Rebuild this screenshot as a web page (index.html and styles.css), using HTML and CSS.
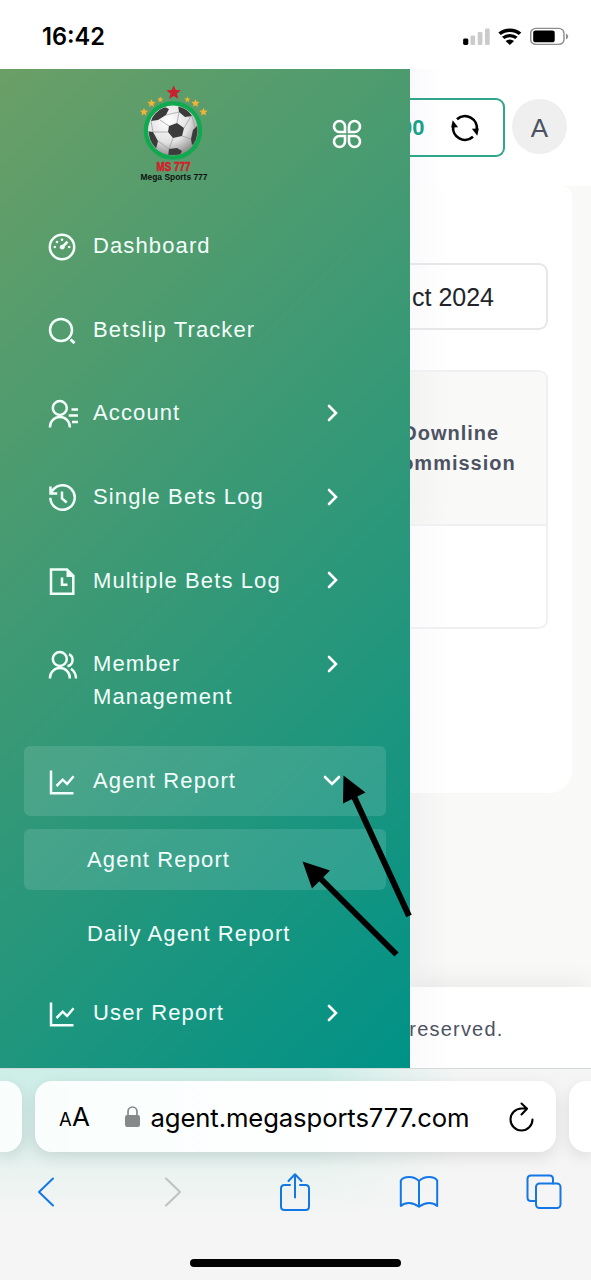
FILE: index.html
```html
<!DOCTYPE html>
<html lang="en">
<head>
<meta charset="utf-8">
<title>Agent Report</title>
<link rel="stylesheet" href="styles.css">
</head>
<body>
<div class="phone">
  <header class="status">
    <span class="time">16:42</span>
    <svg class="status-icons" width="119" height="20" viewBox="0 0 106 20" preserveAspectRatio="none">
      <rect x="1" y="11.500" width="4.600" height="6.500" rx="1.400" fill="#000"/>
      <g fill="#cbcbcb"><rect x="7.500" y="8.500" width="4.200" height="9.500" rx="1.200"/><rect x="14" y="5" width="4.200" height="13" rx="1.200"/><rect x="20.500" y="1.500" width="4.200" height="16.500" rx="1.200"/></g>
      <g fill="none" stroke="#000" stroke-width="3.300"><path d="M33.500 6.800a13.500 13.500 0 0 1 18.200 0"/><path d="M36.700 10.900a8.600 8.600 0 0 1 11.800 0"/></g>
      <path d="M38.800 14.100a5.500 5.500 0 0 1 7.600 0L42.600 18z" fill="#000"/>
      <rect x="61.200" y="1.400" width="29.600" height="16" rx="4.600" fill="none" stroke="#8d8d8d" stroke-width="1.300"/>
      <rect x="63.400" y="3.500" width="19.200" height="11.800" rx="2.400" fill="#000"/>
      <path d="M92.600 6.500q2 1 2 3t-2 3z" fill="#8d8d8d"/>
    </svg>
  </header>

  <div class="app">
    <nav class="sidebar">
      <div class="brand-row">
        <svg class="logo" width="72" height="102" viewBox="0 0 72 102">
          <defs>
            <radialGradient id="ball" cx="40%" cy="32%" r="70%"><stop offset="0" stop-color="#fff"/><stop offset=".6" stop-color="#e2e2e2"/><stop offset="1" stop-color="#8d8d8d"/></radialGradient>
            <clipPath id="ballclip"><circle cx="35" cy="46.500" r="24.500"/></clipPath>
            <path id="star" d="M0-1L.28-.34 1-.3 .44.16 .62.85 0 .47-.62.85-.44.16-1-.3-.28-.34z"/>
          </defs>
          <use href="#star" transform="translate(35.700 8.500) scale(7.300)" fill="#c9202f"/>
          <g fill="#f2b336"><use href="#star" transform="translate(22.300 15.500) scale(3.100)"/><use href="#star" transform="translate(13.500 19.300) scale(4.200)"/><use href="#star" transform="translate(6 28) scale(4.200)"/><use href="#star" transform="translate(49.400 15.500) scale(3.100)"/><use href="#star" transform="translate(57.500 19.300) scale(4.200)"/><use href="#star" transform="translate(65.500 28) scale(4.200)"/></g>
          <circle cx="35" cy="46.500" r="27" fill="none" stroke="#0fa94f" stroke-width="4.500"/>
          <circle cx="35" cy="46.500" r="25" fill="url(#ball)"/>
          <g clip-path="url(#ballclip)">
            <g fill="#3b3b3b"><path d="M31 42l8-3 7 5-2 8-9 2-5-6z"/><path d="M16 29l9-7 6 3-3 6-8 5-7 1z"/><path d="M40 21l10 5 4 6-7 1-6-5z"/><path d="M9 47l6 1 5 9-2 8-8-5z"/><path d="M31 65l8-1 5 3-3 6H30z"/><path d="M55 46l6-6v16l-7 5-1-6z"/></g>
            <g fill="none" stroke="#999" stroke-width=".7"><path d="M31 42l-9-6M39 39l2-11M46 44l7-12M44 52l9 3M35 54l-4 11M30 48l-15 0M28 31l13-3M15 48l-2-11M54 32l3 12M20 57l11 8M53 61l-9 6"/></g>
          </g>
          <text x="35.500" y="87" class="logo-name" textLength="34" lengthAdjust="spacingAndGlyphs">MS 777</text>
          <text x="36" y="95.500" class="logo-sub" textLength="67" lengthAdjust="spacingAndGlyphs">Mega Sports 777</text>
        </svg>
        <svg class="apps" width="30" height="30" viewBox="0 0 30 30" fill="none" stroke="#fff" stroke-width="2.600"><path d="M13 13H7.500A5.500 5.500 0 1 1 13 7.500z"/><path d="M17 13h5.500A5.500 5.500 0 1 0 17 7.500z"/><path d="M13 17H7.500a5.500 5.500 0 1 0 5.500 5.500z"/><path d="M17 17h5.500a5.500 5.500 0 1 1-5.500 5.500z"/></svg>
      </div>

      <div class="menu">
        <div class="item"><svg class="ico" viewBox="0 0 30 30"><circle cx="14" cy="15" r="12.200"/><path d="M14.500 15l5-5.400" stroke-width="2.600"/><g class="solid"><circle cx="14.200" cy="15.200" r="2.400"/><circle cx="14" cy="7.800" r="1.300"/><circle cx="9" cy="10" r="1.300"/><circle cx="6.800" cy="15" r="1.300"/><circle cx="21.200" cy="15" r="1.300"/></g></svg><span class="label">Dashboard</span></div>
        <div class="item"><svg class="ico" viewBox="0 0 30 30"><circle cx="13" cy="14" r="11"/><path d="M22.500 23.500l4 3.600" stroke-width="2.800"/></svg><span class="label">Betslip Tracker</span></div>
        <div class="item"><svg class="ico" viewBox="0 0 30 30"><circle cx="11.800" cy="9" r="7"/><path d="M2 28.500v-1a9.900 9.500 0 0 1 19.800 0v1M23.500 10.400H30M20.800 16.600H30M24 22.900h6"/></svg><span class="label">Account</span><svg class="chev" viewBox="0 0 12 18"><path d="M2 2l7 7-7 7"/></svg></div>
        <div class="item"><svg class="ico" viewBox="0 0 30 30"><path d="M3.300 9.700A12.200 12.200 0 1 1 2.300 14.800M2.500 3.500v7h6.800M14 8.500v7l4.700 4"/></svg><span class="label">Single Bets Log</span><svg class="chev" viewBox="0 0 12 18"><path d="M2 2l7 7-7 7"/></svg></div>
        <div class="item"><svg class="ico" viewBox="0 0 30 30"><path d="M3 3.500h16l6.300 6.300v17.900H3zM14 11.500v7.200h5.500"/><path class="solid" d="M18.500 3v8h7z"/></svg><span class="label">Multiple Bets Log</span><svg class="chev" viewBox="0 0 12 18"><path d="M2 2l7 7-7 7"/></svg></div>
        <div class="item"><svg class="ico" viewBox="0 0 30 30"><circle cx="11.800" cy="9" r="7"/><path d="M2 28.500v-1a9.900 9.500 0 0 1 19.800 0v1M21 4.200a6.400 6.400 0 0 1-1.500 12M23 18.800a12 12 0 0 1 5 9.700"/></svg><span class="label">Member Management</span><svg class="chev" viewBox="0 0 12 18"><path d="M2 2l7 7-7 7"/></svg></div>
        <div class="item active"><svg class="ico" viewBox="0 0 30 30"><path d="M3 3.500v22.700h22.500M8.500 19l6.200-6.300 4.400 4.300 6.500-7.800"/></svg><span class="label">Agent Report</span><svg class="chev down" viewBox="0 0 18 12"><path d="M2 2l7 7 7-7"/></svg></div>
        <div class="item sub active"><span class="label">Agent Report</span></div>
        <div class="item sub"><span class="label">Daily Agent Report</span></div>
        <div class="item"><svg class="ico" viewBox="0 0 30 30"><path d="M3 3.500v22.700h22.500M8.500 19l6.200-6.300 4.400 4.300 6.500-7.800"/></svg><span class="label">User Report</span><svg class="chev" viewBox="0 0 12 18"><path d="M2 2l7 7-7 7"/></svg></div>
      </div>
    </nav>

    <main class="page">
      <div class="topbar">
        <div class="balance"><span class="amount">00</span>
          <svg width="30" height="30" viewBox="0 0 30 30" fill="none" stroke="#000" stroke-width="2.700"><path d="M7 6.200A12 12 0 0 1 26.800 17"/><path d="M23 23.800A12 12 0 0 1 3.200 13"/><path d="M28.800 15.500l-1.500 7.300-5.400-7z" fill="#000" stroke="none"/><path d="M1.200 14.500l1.500-7.300 5.400 7z" fill="#000" stroke="none"/></svg>
        </div>
        <div class="avatar">A</div>
      </div>
      <section class="card">
        <div class="date">ct 2024</div>
        <div class="table"><div class="th"><span>Downline</span><span class="tail">ommission</span></div><div class="td"></div></div>
      </section>
      <footer class="footer">reserved.</footer>
    </main>
  </div>

  <div class="safari">
    <div class="tabs">
      <div class="tab left"></div>
      <div class="url">
        <span class="aa"><small>A</small>A</span>
        <svg class="lock" width="15" height="21" viewBox="0 0 15 21"><rect x="0" y="9" width="15" height="12" rx="2.200" fill="#85898a"/><path d="M3 10V5.800a4.500 4.800 0 0 1 9 0V10" fill="none" stroke="#85898a" stroke-width="1.700"/></svg>
        <span class="host">agent.megasports777.com</span>
        <svg class="reload" width="26" height="30" viewBox="0 0 26 30" fill="none" stroke="#000" stroke-width="2.100" stroke-linecap="round" stroke-linejoin="round"><path d="M23.500 17.500A11 11 0 1 1 12.500 6.500h5.500M12.500 1.500l5.500 5.200-5.500 5.700"/></svg>
      </div>
      <div class="tab right"></div>
    </div>
    <div class="tools">
      <svg width="18" height="30" viewBox="0 0 18 30"><path d="M16 1.500L2 15l14 13.500"/></svg>
      <svg class="disabled" width="18" height="30" viewBox="0 0 18 30"><path d="M2 1.500L16 15 2 28.500"/></svg>
      <svg width="32" height="40" viewBox="0 0 32 40"><path d="M11 13H5.500Q2 13 2 16.500v18Q2 38 5.500 38h21q3.500 0 3.500-3.500v-18Q30 13 26.500 13H21M16 25.500V2.500M9.500 9L16 2.200 22.500 9"/></svg>
      <svg width="40" height="34" viewBox="0 0 40 34"><path d="M20 6Q16 2 10 2T1.800 5.500V31Q5 28 10 28t10 3.800Q25 28 30 28t8.200 3V5.500Q36 2 30 2T20 6v25.500"/></svg>
      <svg width="36" height="36" viewBox="0 0 36 36"><path d="M9.500 27H5q-3.500 0-3.500-3.500V5Q1.500 1.500 5 1.500h18.500Q27 1.500 27 5v4.500"/><rect x="10" y="9.500" width="24.500" height="24.500" rx="3.500"/></svg>
    </div>
    <div class="home"></div>
  </div>

  <svg class="arrows" width="591" height="1280" viewBox="0 0 591 1280"><path d="M409 916L351 790M396.500 954.500L317 875" stroke="#000" stroke-width="6"/><path d="M343.500 775.500l22 17-22.500 11zM302.500 861.500l27.500 9-18 18z" fill="#000"/></svg>
</div>
</body>
</html>
```
FILE: styles.css
```css
* { box-sizing: border-box; }
body { margin: 0; background: #fff; font-family: "Liberation Sans", Arial, sans-serif; }
svg { display: block; flex: none; }
.phone { position: relative; width: 591px; height: 1280px; overflow: hidden; display: flex; flex-direction: column; }

.status { height: 69px; flex: none; display: flex; justify-content: space-between; align-items: center; padding: 4px 10px 0 42px; }
.time { font: 600 23.6px/30px Inter, sans-serif; }

.app { height: 999px; flex: none; display: grid; grid-template-columns: 409.5px 1fr; }
.sidebar { background: linear-gradient(135deg, #6b9f66, #009287); padding: 0 24px; overflow: hidden; color: #f3fffb; }
.brand-row { height: 142px; display: flex; align-items: flex-start; padding: 15px 24px 0 114px; justify-content: space-between; }
.logo { overflow: visible; }
.logo-name { font: bold 12px "Liberation Sans", sans-serif; fill: #d31f2c; stroke: #d31f2c; stroke-width: .6; text-anchor: middle; }
.logo-sub { font: bold 9px "Liberation Sans", sans-serif; fill: #111; text-anchor: middle; }
.apps { margin-top: 35px; }
.menu { display: flex; flex-direction: column; gap: 13.3px; }
.item { min-height: 70.3px; padding: 18.3px 46px 18.9px 24px; display: flex; align-items: flex-start; border-radius: 6px; }
.item.active { background: rgba(255, 255, 255, .12); }
.label { font-size: 22px; line-height: 33.1px; letter-spacing: 1.12px; flex: 1; }
.item:not(.sub) .label { max-width: 200px; }
.item.sub { min-height: 61px; padding: 13.5px 20px 13.5px 63px; }
.ico { width: 30px; height: 30px; margin: 2.8px 15.2px 0 -0.2px; fill: none; stroke: #f3fffb; stroke-width: 2.5; }
.ico .solid { fill: #f3fffb; stroke: none; }
.chev { width: 12px; height: 18px; margin: 7.7px 0 0 auto; position: relative; left: -0.8px; fill: none; stroke: #fff; stroke-width: 2.6; stroke-linecap: round; }
.chev.down { width: 18px; height: 12px; margin-top: 11.5px; margin-right: -2.5px; }

.page { background: linear-gradient(90deg, #f2f2f2, #f9f9f8 40px); overflow: hidden; display: flex; flex-direction: column; color: #4d5263; }
.topbar { height: 117px; flex: none; display: flex; padding: 29px 24px 0 0; gap: 7px; background: linear-gradient(90deg, #f9f9fc, #fff 30px); justify-content: flex-end; }
.balance { width: 95.500px; flex: none; height: 59px; border: 2px solid #2fa58b; border-left: 0; border-radius: 0 9px 9px 0; display: flex; align-items: center; justify-content: flex-end; gap: 25px; padding-right: 23.5px; }
.amount { font-weight: bold; font-size: 22px; color: #19a087; }
.avatar { width: 55px; height: 55px; flex: none; margin-top: 1px; border-radius: 50%; background: #efeff0; font-size: 26px; line-height: 58px; text-align: center; }
.card { width: 162.500px; height: 607px; flex: none; border-radius: 0 10px 22px 0; background: linear-gradient(90deg, #fafafc, #fff 40px); padding: 77px 24px 0 0; }
.date { height: 67px; border: 2px solid #e7e7ea; border-left: 0; border-radius: 0 9px 9px 0; display: flex; align-items: center; justify-content: flex-end; padding: 2px 52px 0 0; font-size: 25px; color: #222429; white-space: nowrap; }
.table { height: 259px; margin-top: 40px; border: 2px solid #f0f0f3; border-left: 0; border-radius: 0 9px 9px 0; overflow: hidden; }
.th { height: 154px; padding-right: 54px; border-bottom: 2px solid #f0f0f3; background: linear-gradient(90deg, #f3f3f2, #f9f9f8 40px); display: flex; flex-direction: column; align-items: center; justify-content: center; font-weight: bold; font-size: 20px; line-height: 30px; letter-spacing: 1px; }
.tail { padding-left: 15.4px; }
.footer { margin-top: auto; height: 81px; flex: none; background: linear-gradient(90deg, #fafafc, #fff 40px); box-shadow: 0 -4px 25px rgba(0, 0, 0, .07); padding-right: 87.500px; display: flex; align-items: center; justify-content: flex-end; font-size: 20px; letter-spacing: 1.2px; padding-top: 3px; }

.safari { flex: 1; background: linear-gradient(90deg, rgba(245, 245, 245, 0) 320px, #f5f5f5 460px), linear-gradient(#cdeee8, #d7ece8 70px, #e9f3f0 100px, #f5f5f5 150px); border-top: 1px solid #d4dad9; }
.tabs { display: grid; grid-template-columns: 22px 521px 22px; gap: 13px; padding-top: 12px; }
.tab, .url { height: 71px; background: linear-gradient(90deg, #f9fefd, #fff 400px); box-shadow: 0 5px 16px rgba(0, 0, 0, .1); }
.tab.left { border-radius: 0 17px 17px 0; }
.tab.right { background: #fff; border-radius: 17px 0 0 17px; }
.url { border-radius: 17px; display: flex; align-items: center; padding: 0 21px 0 24px; color: #000; font-family: Inter, sans-serif; }
.aa { font-size: 26px; width: 66px; line-height: 30px; letter-spacing: .1px; margin-top: 3px; }
.aa small { font-size: 18.5px; }
.lock { margin-top: 0; }
.host { font-size: 25.7px; margin-left: 10.5px; letter-spacing: -.12px; white-space: nowrap; margin-top: 2px; }
.reload { margin-left: auto; margin-top: 0; }
.tools { display: grid; grid-template-columns: repeat(5, 124.4px); align-items: center; justify-items: center; height: 40px; margin: 20px 0 0 -16px; fill: none; stroke: #1477e6; stroke-width: 2; stroke-linecap: round; stroke-linejoin: round; }
.disabled { stroke: #bfc1c1; margin-left: 5px; }
.home { width: 211px; height: 8px; margin: 47px auto 0; border-radius: 4px; background: #000; }
.arrows { position: absolute; inset: 0; pointer-events: none; }
```
